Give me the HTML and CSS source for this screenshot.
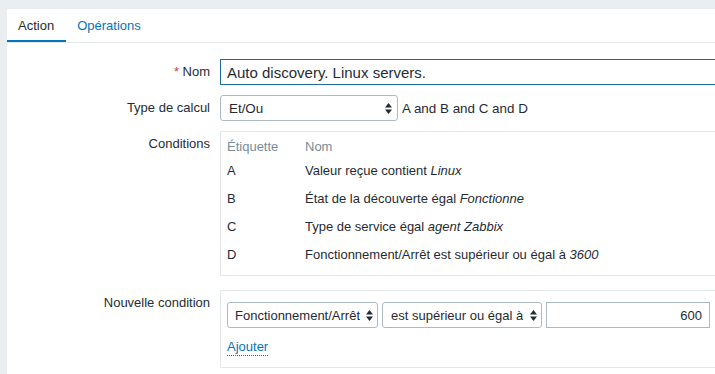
FILE: index.html
```html
<!DOCTYPE html>
<html lang="fr">
<head>
<meta charset="utf-8">
<title>Action</title>
<link rel="stylesheet" href="styles.css">
</head>
<body>
<div class="page">
  <div class="panel">
    <ul class="tabs">
      <li class="tab active">Action</li>
      <li class="tab"><a href="#">Opérations</a></li>
    </ul>
    <form class="form">
      <label class="lbl"><span class="req">*</span> Nom</label>
      <div class="field"><input class="text-input focused" type="text" value="Auto discovery. Linux servers."></div>

      <label class="lbl">Type de calcul</label>
      <div class="field inline">
        <div class="select sel-calc"><span>Et/Ou</span><svg class="arrows" width="7" height="11" viewBox="0 0 7 11"><path d="M3.5 0L7 4.5H0z M3.5 11L0 6.5h7z" fill="#1f2c33"/></svg></div>
        <span class="expr">A and B and C and D</span>
      </div>

      <label class="lbl">Conditions</label>
      <div class="field">
        <div class="box cond-box">
          <div class="crow head"><span class="c1">Étiquette</span><span>Nom</span></div>
          <div class="crow"><span class="c1">A</span><span>Valeur reçue contient <em>Linux</em></span></div>
          <div class="crow"><span class="c1">B</span><span>État de la découverte égal <em>Fonctionne</em></span></div>
          <div class="crow"><span class="c1">C</span><span>Type de service égal <em>agent Zabbix</em></span></div>
          <div class="crow"><span class="c1">D</span><span>Fonctionnement/Arrêt est supérieur ou égal à <em>3600</em></span></div>
        </div>
      </div>

      <label class="lbl lbl-new">Nouvelle condition</label>
      <div class="field field-new">
        <div class="box new-box">
          <div class="new-row">
            <div class="select sel-type"><span>Fonctionnement/Arrêt</span><svg class="arrows" width="7" height="11" viewBox="0 0 7 11"><path d="M3.5 0L7 4.5H0z M3.5 11L0 6.5h7z" fill="#1f2c33"/></svg></div>
            <div class="select sel-op"><span>est supérieur ou égal à</span><svg class="arrows" width="7" height="11" viewBox="0 0 7 11"><path d="M3.5 0L7 4.5H0z M3.5 11L0 6.5h7z" fill="#1f2c33"/></svg></div>
            <input class="num-input" type="text" value="600">
          </div>
          <a class="link" href="#">Ajouter</a>
        </div>
      </div>
    </form>
  </div>
</div>
</body>
</html>
```

FILE: styles.css
```css
* { box-sizing: border-box; }
html, body {
  margin: 0;
  padding: 0;
  overflow: hidden;
  background: #ebeef0;
  font-family: "Liberation Sans", Arial, sans-serif;
  font-size: 13px;
  color: #1f2c33;
}
.page {
  padding: 9px 0 0 7px;
  height: 374px;
}
.panel {
  background: #fff;
  height: 100%;
  width: 708px;
}
.tabs {
  list-style: none;
  margin: 0;
  padding: 0;
  display: flex;
  border-bottom: 1px solid #e6e9eb;
}
.tab {
  padding: 3px 11px 0 11px;
  height: 33px;
  line-height: 28px;
  border-bottom: 2px solid transparent;
}
.tab.active {
  border-bottom-color: #0275b8;
  padding-right: 12px;
}
.tab a {
  color: #0275b8;
  text-decoration: none;
  display: block;
}
.form {
  display: grid;
  grid-template-columns: 203px 1fr;
  column-gap: 10px;
  row-gap: 10px;
  padding-top: 16px;
}
.lbl {
  text-align: right;
  line-height: 26px;
  white-space: nowrap;
}
.lbl-new, .field-new { margin-top: 4px; }
.req { color: #e33734; }
.field { min-width: 0; }
.inline {
  display: flex;
  align-items: center;
  gap: 4px;
}
.expr { font-size: 13.4px; }
.text-input {
  display: block;
  width: 520px;
  height: 26px;
  border: 1px solid #1b6a9a;
  padding: 0 6px;
  font-family: inherit;
  font-size: 15px;
  color: inherit;
  outline: none;
}
.select {
  display: flex;
  align-items: center;
  justify-content: space-between;
  height: 26px;
  border: 1px solid #acbbc2;
  border-radius: 3px;
  padding: 0 4px 0 8px;
  background: #fff;
  white-space: nowrap;
  overflow: hidden;
}
.select span { overflow: hidden; }
.arrows { flex: none; margin-left: 2px; }
.sel-calc { width: 178px; padding-right: 5px; }
.sel-calc span { font-size: 13.4px; }
.box {
  border: 1px solid #e3e7ea;
  width: 520px;
}
.cond-box {
  padding: 4px 6px 6px 6px;
}
.crow {
  display: flex;
  height: 28px;
  line-height: 28px;
}
.crow.head {
  height: 21px;
  line-height: 21px;
  color: #768d99;
}
.c1 { width: 78px; flex: none; }
.crow em { font-style: italic; }
.new-box {
  padding: 11px 6px 11px 6px;
}
.new-row {
  display: flex;
  gap: 4px;
}
.sel-type { width: 151px; padding-left: 7px; }
.sel-op { width: 160px; padding-left: 8px; }
.num-input {
  width: 164px;
  height: 26px;
  border: 1px solid #acbbc2;
  text-align: right;
  padding: 0 7px;
  font: inherit;
  color: inherit;
  outline: none;
}
.link {
  display: inline-block;
  margin-top: 10px;
  color: #0275b8;
  text-decoration: none;
  border-bottom: 1px dotted #0275b8;
  line-height: 17px;
}
```
